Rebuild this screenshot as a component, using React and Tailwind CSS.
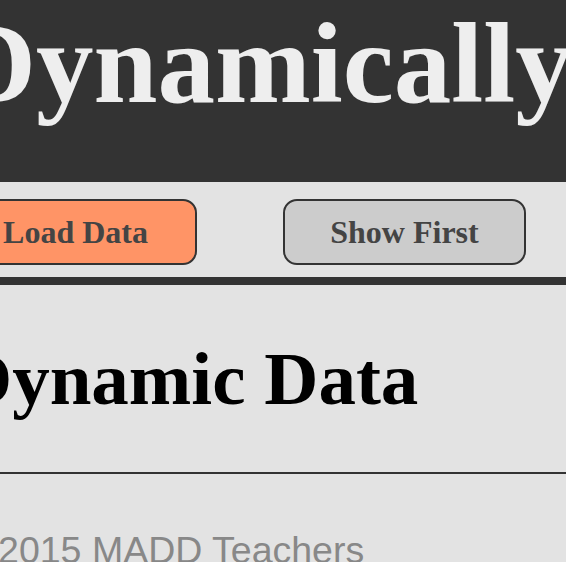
export default function App() {
  return (
    <div className="w-[566px] h-[562px] overflow-hidden bg-[#e3e3e3]">
      <header className="h-[182px] bg-[#333333] overflow-hidden pt-[6px]">
        <h1 className="ml-[-47px] whitespace-nowrap font-['Liberation_Serif',serif] font-bold text-[115px] leading-none text-[#eeeeee]">
          Dynamically Loaded Content
        </h1>
      </header>
      <div className="mt-[17px] ml-[-46px] flex gap-[86px]">
        <button className="w-[243px] h-[66px] shrink-0 flex items-center justify-center rounded-[14px] border-2 border-[#333333] bg-[#ff9466] font-['Liberation_Serif',serif] font-bold text-[32px] text-[#444444]">
          Load Data
        </button>
        <button className="w-[243px] h-[66px] shrink-0 flex items-center justify-center rounded-[14px] border-2 border-[#333333] bg-[#cccccc] font-['Liberation_Serif',serif] font-bold text-[32px] text-[#444444]">
          Show First
        </button>
      </div>
      <div className="mt-[12px] h-[8px] bg-[#333333]" />
      <section className="border-b-2 border-[#333333]">
        <h2 className="ml-[-42px] my-[56px] whitespace-nowrap font-['Liberation_Serif',serif] font-bold text-[75px] leading-none text-black">
          Dynamic Data
        </h2>
      </section>
      <footer className="mt-[58px] ml-[-40px] whitespace-nowrap font-['Liberation_Sans',sans-serif] text-[37.5px] leading-none text-[#888888]">
        © 2015 MADD Teachers
      </footer>
    </div>
  );
}
